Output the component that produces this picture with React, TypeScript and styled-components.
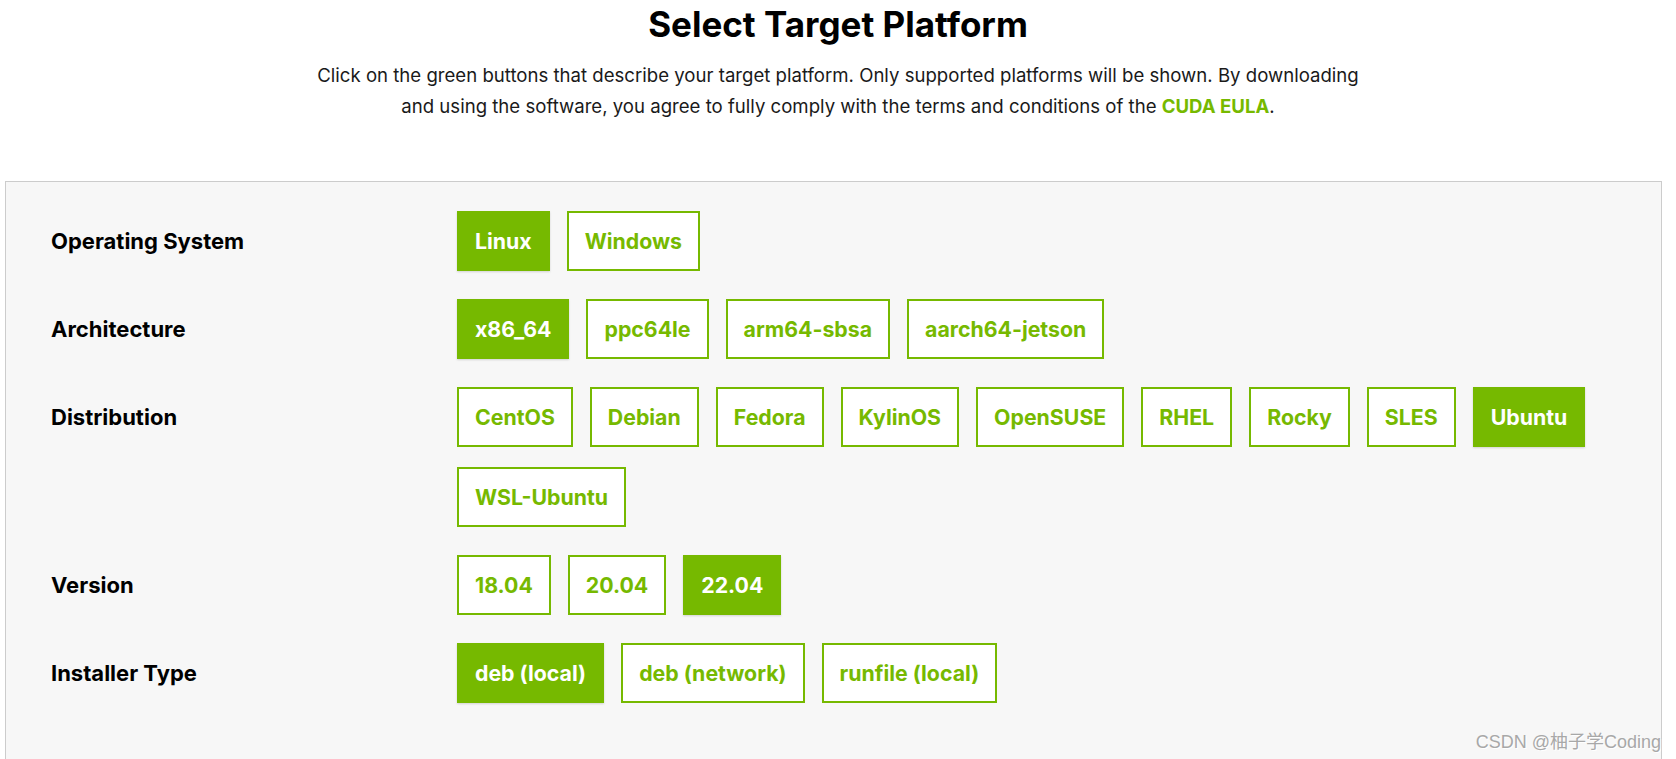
import styled, { createGlobalStyle } from "styled-components";

const GREEN = "#76b900";

const GlobalStyle = createGlobalStyle`
  html, body {
    margin: 0;
    padding: 0;
    background: #fff;
    overflow: hidden;
  }
  body {
    font-family: Inter, "Noto Sans", sans-serif;
    color: #1a1a1a;
  }
`;

type Option = { label: string; active?: boolean };
type Group = { title: string; options: Option[] };

const groups: Group[] = [
  {
    title: "Operating System",
    options: [{ label: "Linux", active: true }, { label: "Windows" }],
  },
  {
    title: "Architecture",
    options: [
      { label: "x86_64", active: true },
      { label: "ppc64le" },
      { label: "arm64-sbsa" },
      { label: "aarch64-jetson" },
    ],
  },
  {
    title: "Distribution",
    options: [
      { label: "CentOS" },
      { label: "Debian" },
      { label: "Fedora" },
      { label: "KylinOS" },
      { label: "OpenSUSE" },
      { label: "RHEL" },
      { label: "Rocky" },
      { label: "SLES" },
      { label: "Ubuntu", active: true },
      { label: "WSL-Ubuntu" },
    ],
  },
  {
    title: "Version",
    options: [{ label: "18.04" }, { label: "20.04" }, { label: "22.04", active: true }],
  },
  {
    title: "Installer Type",
    options: [
      { label: "deb (local)", active: true },
      { label: "deb (network)" },
      { label: "runfile (local)" },
    ],
  },
];

export default function App() {
  return (
    <Page>
      <GlobalStyle />
      <Header>
        <Title>Select Target Platform</Title>
        <Intro>
          Click on the green buttons that describe your target platform. Only supported platforms
          will be shown. By downloading
          <br />
          and using the software, you agree to fully comply with the terms and conditions of the{" "}
          <EulaLink href="#">CUDA EULA</EulaLink>.
        </Intro>
      </Header>
      <Panel>
        {groups.map((g) => (
          <Row key={g.title}>
            <RowLabel>{g.title}</RowLabel>
            <Options>
              {g.options.map((o) => (
                <OptionButton key={o.label} $active={!!o.active}>
                  {o.label}
                </OptionButton>
              ))}
            </Options>
          </Row>
        ))}
      </Panel>
      <Watermark>CSDN @柚子学Coding</Watermark>
    </Page>
  );
}

const Page = styled.div`
  width: 1676px;
  height: 759px;
  overflow: hidden;
`;

const Header = styled.header`
  display: flex;
  flex-direction: column;
  align-items: center;
  padding-top: 2px;
`;

const Title = styled.h1`
  margin: 0;
  font-size: 35px;
  line-height: 44px;
  font-weight: 700;
  color: #000;
`;

const Intro = styled.p`
  margin: 14px 0 0;
  text-align: center;
  font-size: 18.6px;
  line-height: 31px;
  color: #1a1a1a;
`;

const EulaLink = styled.a`
  color: ${GREEN};
  font-weight: 700;
  text-decoration: none;
`;

const Panel = styled.section`
  margin: 59px 14px 0 5px;
  min-height: 640px;
  box-sizing: border-box;
  border: 1px solid #ccc;
  background: #f7f7f7;
  padding: 29px 45px;
  display: flex;
  flex-direction: column;
  gap: 28px;
`;

const Row = styled.div`
  display: grid;
  grid-template-columns: 406px 1fr;
  align-items: start;
`;

const RowLabel = styled.div`
  height: 60px;
  display: flex;
  align-items: center;
  font-size: 22px;
  font-weight: 700;
  color: #000;
`;

const Options = styled.div`
  display: flex;
  flex-wrap: wrap;
  gap: 20px 17px;
  max-width: 1150px;
`;

const OptionButton = styled.button<{ $active: boolean }>`
  height: 60px;
  box-sizing: border-box;
  padding: 0 16px;
  border: 2px solid ${GREEN};
  background: ${(p) => (p.$active ? GREEN : "#fff")};
  color: ${(p) => (p.$active ? "#fff" : GREEN)};
  font-family: Inter, "Noto Sans", sans-serif;
  font-size: 21.3px;
  font-weight: 700;
  cursor: pointer;
  box-shadow: ${(p) => (p.$active ? "0 1px 2px rgba(0,0,0,0.15)" : "none")};
`;

const Watermark = styled.div`
  position: absolute;
  right: 15px;
  top: 727px;
  font-family: "Liberation Sans", "Noto Sans CJK SC", sans-serif;
  font-size: 18px;
  color: #a8a8a8;
  text-shadow: 1px 1px 0 #fff;
`;
